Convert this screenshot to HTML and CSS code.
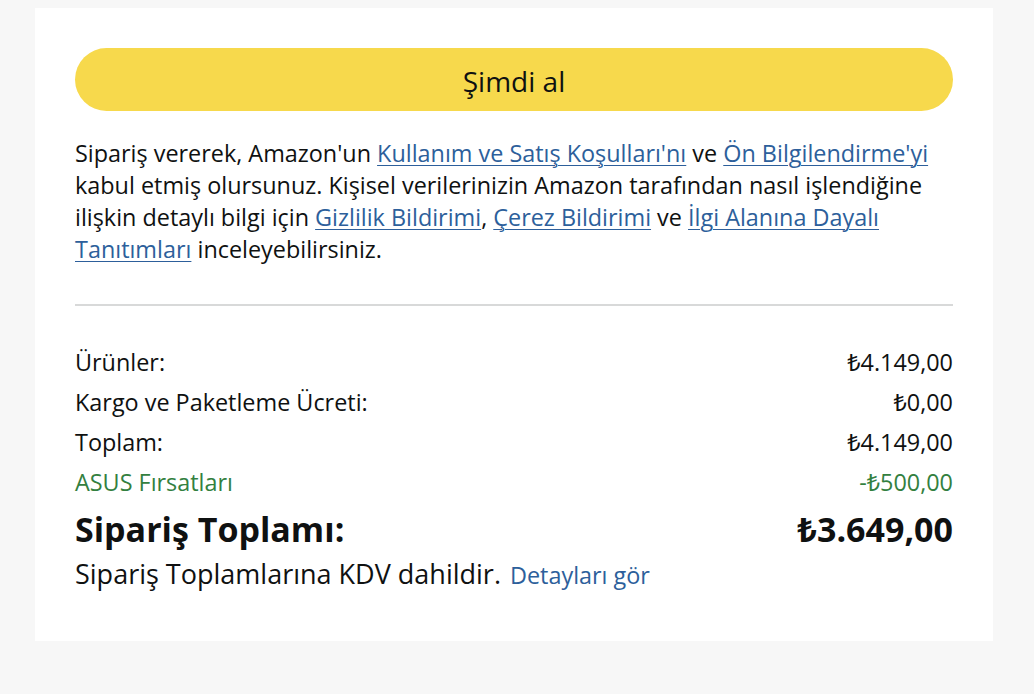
FILE: index.html
```html
<!DOCTYPE html>
<html lang="tr">
<head>
<meta charset="utf-8">
<title>Sipariş</title>
<link rel="stylesheet" href="styles.css">
</head>
<body>
<div class="card">
  <button class="buy">Şimdi al</button>
  <p class="legal">Sipariş vererek, Amazon'un <a href="#">Kullanım ve Satış Koşulları'nı</a> ve <a href="#">Ön Bilgilendirme'yi</a> kabul etmiş olursunuz. Kişisel verilerinizin Amazon tarafından nasıl işlendiğine ilişkin detaylı bilgi için <a href="#">Gizlilik Bildirimi</a>, <a href="#">Çerez Bildirimi</a> ve <a href="#">İlgi Alanına Dayalı Tanıtımları</a> inceleyebilirsiniz.</p>
  <hr class="divider">
  <div class="summary">
    <div class="row"><span>Ürünler:</span><span>₺4.149,00</span></div>
    <div class="row"><span>Kargo ve Paketleme Ücreti:</span><span>₺0,00</span></div>
    <div class="row"><span>Toplam:</span><span>₺4.149,00</span></div>
    <div class="row promo"><span>ASUS Fırsatları</span><span>-₺500,00</span></div>
    <div class="row total"><span>Sipariş Toplamı:</span><span>₺3.649,00</span></div>
  </div>
  <p class="vat">Sipariş Toplamlarına KDV dahildir. <a href="#" class="details">Detayları gör</a></p>
</div>
</body>
</html>
```
FILE: styles.css
```css
html, body {
  margin: 0;
  padding: 0;
  background: #f7f7f7;
}
body {
  padding: 8px 41px 0 35px;
  font-family: "Open Sans", "Noto Sans", "DejaVu Sans", sans-serif;
  font-size: 23.4px;
  line-height: 32px;
  color: #0f1111;
}
.card {
  background: #ffffff;
  padding: 40px 40px 48px 40px;
}
.buy {
  display: block;
  width: 100%;
  height: 63px;
  border: none;
  border-radius: 32px;
  background: #f7d94c;
  color: #0f1111;
  font-family: inherit;
  font-size: 28px;
  line-height: 36px;
  padding: 2px 0 0 0;
  cursor: pointer;
}
.legal {
  margin: 26px 0 0 0;
}
.legal a {
  color: #2d5f9b;
  text-decoration: underline;
  text-underline-offset: 3px;
  text-decoration-thickness: 1px;
}
.divider {
  border: none;
  height: 2px;
  background: #d8d9d9;
  margin: 39px 0 40px 0;
}
.summary {
  display: flex;
  flex-direction: column;
  gap: 8px;
}
.row {
  display: flex;
  justify-content: space-between;
}
.promo {
  color: #33803f;
}
.total {
  font-size: 34px;
  line-height: 44px;
  font-weight: 700;
  margin-top: 1px;
}
.vat {
  margin: 5px 0 0 0;
  font-size: 27px;
  line-height: 36px;
}
.details {
  color: #2d5f9b;
  text-decoration: none;
  font-size: 23.4px;
  margin-left: 2px;
}
```
